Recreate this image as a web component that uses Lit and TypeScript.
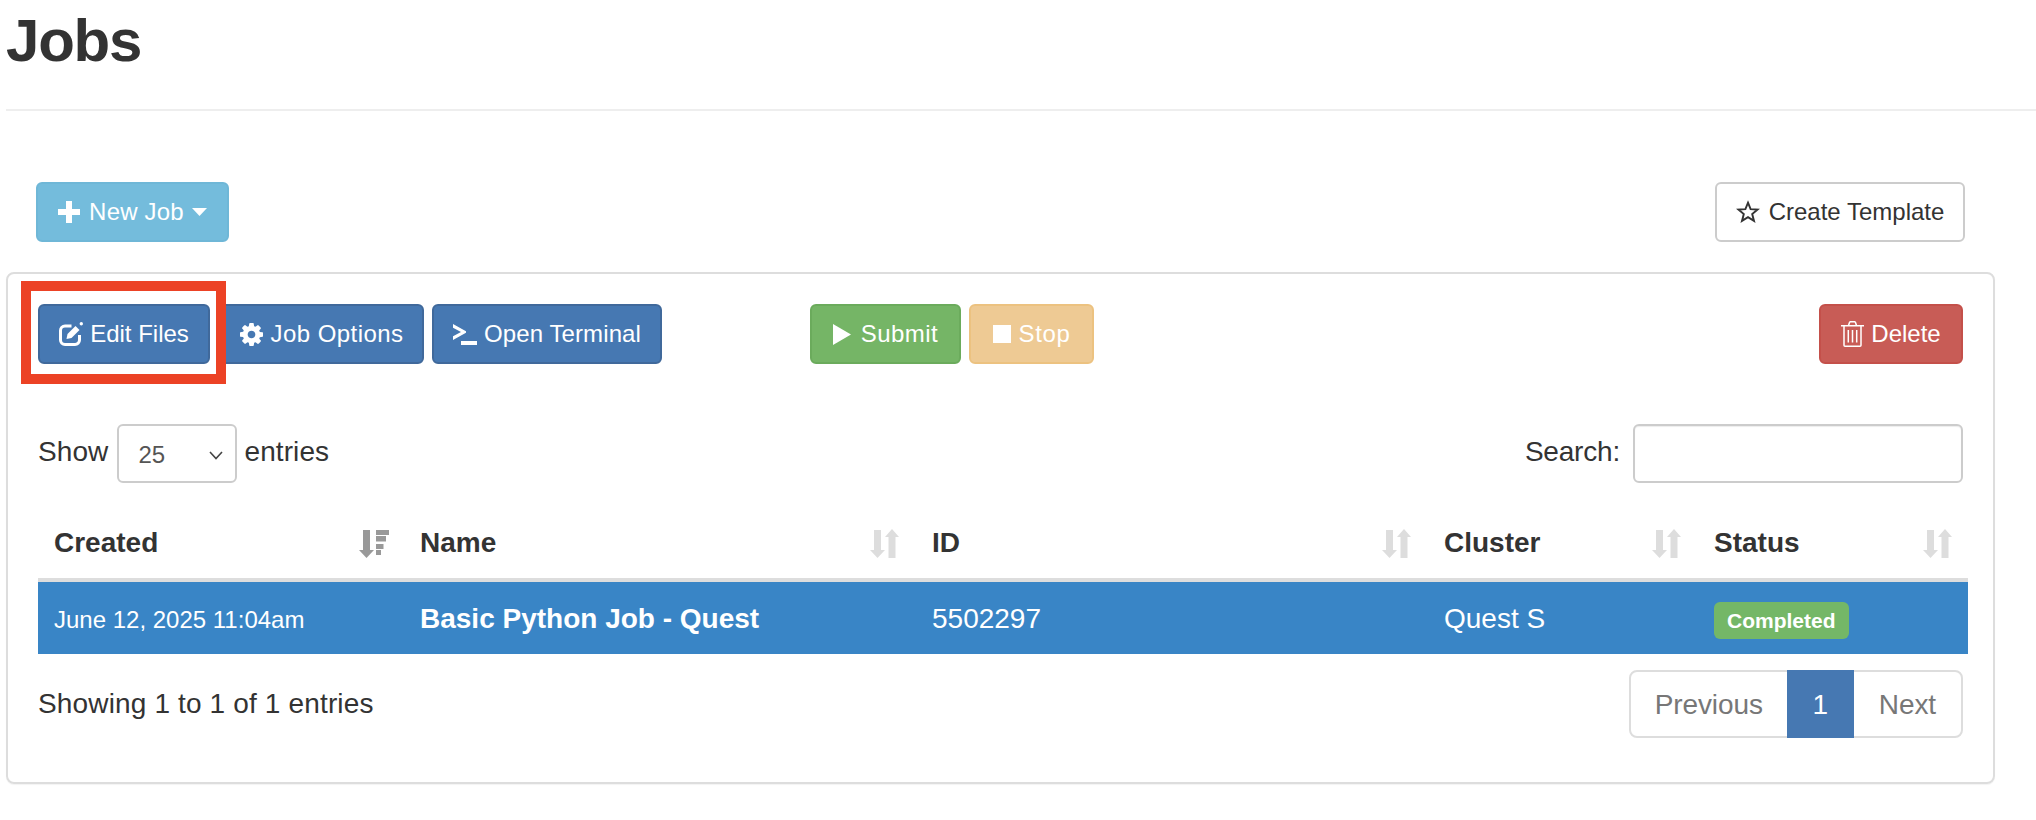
import { LitElement, html, css, svg } from "lit";
import { customElement } from "lit/decorators.js";

const gear = svg`<path d="M1152 896q0-106-75-181t-181-75-181 75-75 181 75 181 181 75 181-75 75-181zm512-109v222q0 12-8 23t-20 13l-185 28q-19 54-39 91 35 50 107 138 10 12 10 25t-9 23q-27 37-99 108t-94 71q-12 0-26-9l-138-108q-44 23-91 38-16 136-29 186-7 28-36 28h-222q-14 0-24.5-8.5t-11.5-21.5l-28-184q-49-16-90-37l-141 107q-10 9-25 9-14 0-25-11-126-114-165-168-7-10-7-23 0-12 8-23 15-21 51-66.5t54-70.5q-27-50-41-99l-183-27q-13-2-21-12.5t-8-23.5v-222q0-12 8-23t19-13l186-28q14-46 39-92-40-57-107-138-10-12-10-24 0-10 9-23 26-36 98.5-107.5t94.5-71.5q13 0 26 10l138 107q44-23 91-38 16-136 29-186 7-28 36-28h222q14 0 24.5 8.5t11.5 21.5l28 184q49 16 90 37l142-107q9-9 24-9 13 0 25 10 129 119 165 170 7 8 7 22 0 12-8 23-15 21-51 66.5t-54 70.5q26 50 41 98l183 28q13 2 21 12.5t8 23.5z"/>`;

@customElement("app-root")
export class AppRoot extends LitElement {
  static styles = css`
    :host { display: block; padding-left: 6px; font-family: "Liberation Sans", Arial, sans-serif; font-size: 28px; color: #333; background: #fff; min-height: 820px; box-sizing: border-box; }
    h1 { margin: 0; height: 111px; box-sizing: border-box; padding-top: 6px; font-size: 60px; line-height: 70px; font-weight: 700; letter-spacing: -1.2px; border-bottom: 2px solid #eee; color: #333; }
    .top { display: flex; justify-content: space-between; padding: 71px 71px 0 30px; }
    .btn { display: inline-flex; align-items: center; justify-content: center; gap: 7px; height: 60px; box-sizing: border-box; padding: 0; border: 2px solid; border-radius: 6px; font-size: 24px; color: #fff; position: relative; white-space: nowrap; }
    .btn svg { display: block; flex: none; fill: currentColor; }
    .info { background: #74bcdc; border-color: #6fb7d7; width: 193px; letter-spacing: .2px; }
    .default { background: #fff; border-color: #ccc; color: #333; width: 250px; gap: 9px; }
    .primary { background: #4678b2; border-color: #40699b; }
    .w-edit { width: 172px; }
    .w-opts { width: 206px; letter-spacing: .45px; }
    .w-opts svg { margin-left: 2px; }
    .w-term { width: 230px; letter-spacing: .1px; }
    .success { background: #75b566; border-color: #6bab5c; width: 151px; gap: 10px; letter-spacing: .45px; }
    .warning { background: #eeca94; border-color: #ecc280; width: 125px; gap: 8px; letter-spacing: .6px; }
    .danger { background: #c85c56; border-color: #c4504a; width: 144px; }
    .info span { margin: 0 1px 0 2px; }
    .panel { margin: 30px 41px 0 0; padding: 30px 30px 44px; border: 2px solid #ddd; border-radius: 8px; box-shadow: 0 1px 1px rgba(0, 0, 0, .05); }
    .toolbar { display: flex; gap: 8px; }
    .spacer-a { margin-left: 140px; }
    .spacer-b { margin-left: auto; margin-right: 0; }
    .mark { position: absolute; left: -19px; top: -25px; width: 205px; height: 103px; box-sizing: border-box; border: 10px solid #ec4225; z-index: 2; pointer-events: none; }
    .controls { display: flex; justify-content: space-between; margin-top: 60px; height: 59px; align-items: center; }
    .lenwrap, .searchwrap { display: flex; align-items: center; gap: 8px; }
    .lbl { padding-bottom: 3px; line-height: 32px; letter-spacing: .1px; }
    .show { margin-right: 1px; }
    .entries { margin-left: -1px; }
    .search { letter-spacing: -.2px; }
    .select { display: flex; align-items: center; justify-content: space-between; width: 120px; height: 59px; box-sizing: border-box; padding: 3px 12px 0 19px; border: 2px solid #ccc; border-radius: 6px; font-size: 24px; color: #555; }
    .select svg { fill: none; stroke: #444; stroke-width: 1.6; }
    input { width: 330px; height: 59px; box-sizing: border-box; border: 2px solid #ccc; border-radius: 6px; box-shadow: inset 0 1px 1px rgba(0, 0, 0, .075); outline: none; background: #fff; margin-left: 5px; }
    .grid { display: grid; grid-template-columns: 365px 512px 512px 270px 271px; margin-right: -5px; }
    .thead { height: 99px; border-bottom: 4px solid #ddd; box-sizing: border-box; align-items: end; padding-bottom: 15px; }
    .th { display: flex; justify-content: space-between; align-items: center; padding: 0 16px 0 17px; font-weight: 700; line-height: 40px; }
    .first { padding: 0 14px 0 16px; }
    .tbody { height: 72px; background: #3985c6; color: #fff; align-items: baseline; padding-top: 20px; box-sizing: border-box; line-height: 32px; }
    .td { padding-left: 17px; }
    .small { font-size: 24px; padding-left: 16px; }
    .bold { font-weight: 700; }
    .badge { display: inline-block; height: 37px; line-height: 37px; padding: 0 13px; background: #74b767; color: #fff; border-radius: 6px; font-size: 21px; font-weight: 700; }
    .sort { fill: #ddd; display: block; }
    .sort.on { fill: #999; }
    .footer { display: flex; justify-content: space-between; align-items: flex-start; margin-top: 16px; }
    .info-text { padding-top: 14px; line-height: 40px; letter-spacing: .15px; }
    .pager { display: flex; height: 68px; box-sizing: border-box; border: 2px solid #ddd; border-radius: 8px; color: #777; position: relative; }
    .pg { display: flex; align-items: center; padding: 2px 25px 0 25px; line-height: 1; letter-spacing: -.1px; }
    .pg.active { background: #4678b2; color: #fff; margin: -2px 0; padding: 2px 0 0; width: 67px; box-sizing: border-box; justify-content: center; }
    .prev { padding: 2px 24px 0 24px; }
  `;

  private sortIcon() {
    return html`<svg class="sort" width="29" height="29" viewBox="0 0 29 29"><path d="M4 1h7v20h4l-7.500 8L0 21h4zM22 0l7 8h-3.500v21h-7V8H15z"/></svg>`;
  }

  render() {
    return html`
      <h1>Jobs</h1>
      <div class="top">
        <div class="btn info">
          <svg width="22" height="22" viewBox="0 0 22 22"><path d="M8 0h6v8h8v6h-8v8H8v-8H0V8h8z"/></svg>
          <span>New Job</span>
          <svg width="15" height="8" viewBox="0 0 15 8"><path d="M0 0h15L7.500 8z"/></svg>
        </div>
        <div class="btn default">
          <svg width="24" height="24" viewBox="0 0 24 24"><path fill="none" stroke="#333" stroke-width="1.900" stroke-linejoin="miter" d="M12 2.700l2.600 6.500 7 .4-5.400 4.500 1.800 6.800-6-3.800-6 3.800 1.800-6.800L2.400 9.600l7-.4z"/></svg>
          <span>Create Template</span>
        </div>
      </div>
      <div class="panel">
        <div class="toolbar">
          <div class="btn primary w-edit">
            <svg width="24" height="24" viewBox="0 0 24 24"><path fill="none" stroke="#fff" stroke-width="3" d="M12.500 4H6A4.500 4.500 0 0 0 1.500 8.500V18A4.500 4.500 0 0 0 6 22.500h10a4.500 4.500 0 0 0 4.500-4.500V13"/><path d="M7.500 17l1-5 8-8 4 4-8 8z"/><circle cx="22.300" cy="1.700" r="1.700"/></svg>
            <span>Edit Files</span>
            <div class="mark"></div>
          </div>
          <div class="btn primary w-opts">
            <svg width="23" height="23" viewBox="128 128 1536 1536">${gear}</svg>
            <span>Job Options</span>
          </div>
          <div class="btn primary w-term">
            <svg width="24" height="21" viewBox="0 0 24 21"><path d="M0 0l13 7.200v1.600L0 16v-3.800l8-4.200-8-4.200zM8 17h16v4H8z"/></svg>
            <span>Open Terminal</span>
          </div>
          <div class="btn success spacer-a">
            <svg width="18" height="21" viewBox="0 0 18 21"><path d="M0 0l18 10.500L0 21z"/></svg>
            <span>Submit</span>
          </div>
          <div class="btn warning">
            <svg width="18" height="18" viewBox="0 0 18 18"><path d="M0 0h18v18H0z"/></svg>
            <span>Stop</span>
          </div>
          <div class="btn danger spacer-b">
            <svg width="23" height="26" viewBox="0 0 23 26"><path fill="none" stroke="#fff" stroke-width="1.500" d="M0 4.700h23M3 5v19.200q0 1 1 1h15q1 0 1-1V5M7.500 4.500l1-3q.3-.8 1-.8h4q.7 0 1 .8l1 3M7.300 9v12.500M11.500 9v12.500M15.700 9v12.500"/></svg>
            <span>Delete</span>
          </div>
        </div>
        <div class="controls">
          <div class="lenwrap">
            <span class="lbl show">Show</span>
            <div class="select">
              <span>25</span>
              <svg width="14" height="9" viewBox="0 0 14 9"><path d="M1 1l6 6.500L13 1"/></svg>
            </div>
            <span class="lbl entries">entries</span>
          </div>
          <div class="searchwrap">
            <span class="lbl search">Search:</span>
            <input type="text" />
          </div>
        </div>
        <div class="grid thead">
          <div class="th first">Created
            <svg class="sort on" width="30" height="29" viewBox="0 0 30 29"><path d="M4 1h7v20h4l-7.500 8L0 21h4zM17 1h13v5H17zM17 7h10v5.500H17zM17 15h7.500v5H17zM17 21h5v5h-5z"/></svg>
          </div>
          <div class="th">Name ${this.sortIcon()}</div>
          <div class="th">ID ${this.sortIcon()}</div>
          <div class="th">Cluster ${this.sortIcon()}</div>
          <div class="th">Status ${this.sortIcon()}</div>
        </div>
        <div class="grid tbody">
          <div class="td small">June 12, 2025 11:04am</div>
          <div class="td bold">Basic Python Job - Quest</div>
          <div class="td">5502297</div>
          <div class="td">Quest S</div>
          <div class="td"><span class="badge">Completed</span></div>
        </div>
        <div class="footer">
          <div class="info-text">Showing 1 to 1 of 1 entries</div>
          <div class="pager">
            <div class="pg prev">Previous</div>
            <div class="pg active">1</div>
            <div class="pg">Next</div>
          </div>
        </div>
      </div>
    `;
  }
}
